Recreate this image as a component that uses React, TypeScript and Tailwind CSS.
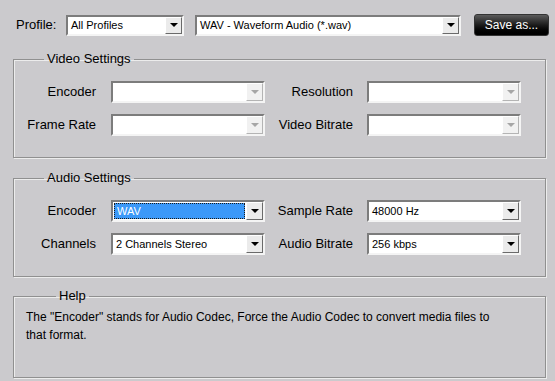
import React from "react";

type ComboProps = {
  value?: string;
  width: string;
  height?: string;
  disabled?: boolean;
  selected?: boolean;
};

// classic sunken combo box with a little raised arrow button
const Combo: React.FC<ComboProps> = ({ value = "", width, height = "h-[22px]", disabled, selected }) => {
  return (
    <div
      className={`${width} ${height} flex bg-white border-2 border-t-[#7c7c7c] border-l-[#7c7c7c] border-b-[#f4f4f4] border-r-[#f4f4f4]`}
    >
      <div className="flex-1 flex items-center min-w-0 p-[1px]">
        {selected ? (
          <div className="h-full w-full flex items-center bg-[#3b98f8] border border-dotted border-[#1a1a1a] pl-[2px] text-[11px] text-white">
            {value}
          </div>
        ) : (
          <span className="pl-[2px] text-[11px] text-black whitespace-nowrap">{value}</span>
        )}
      </div>
      <div
        className={`w-[17px] h-full flex items-center justify-center border border-t-white border-l-white ${
          disabled
            ? "bg-[#f1f1f1] border-b-[#b4b4b4] border-r-[#b4b4b4]"
            : "bg-[#ebebeb] border-b-[#6a6a6a] border-r-[#6a6a6a]"
        }`}
      >
        <div
          className={`w-0 h-0 border-x-[4px] border-x-transparent border-t-[4px] ${
            disabled ? "border-t-[#a6a6a6]" : "border-t-black"
          }`}
        />
      </div>
    </div>
  );
};

type RowProps = {
  left: string;
  right: string;
  leftCombo: React.ReactNode;
  rightCombo: React.ReactNode;
};

const Row: React.FC<RowProps> = ({ left, right, leftCombo, rightCombo }) => (
  <div className="flex items-center">
    <span className="w-[82px] text-right text-[13px] text-black">{left}</span>
    <div className="ml-[15px]">{leftCombo}</div>
    <span className="w-[88px] text-right text-[13px] text-black">{right}</span>
    <div className="ml-[14px]">{rightCombo}</div>
  </div>
);

const Group: React.FC<{ title: string; className?: string; children: React.ReactNode }> = ({
  title,
  className = "",
  children,
}) => (
  <fieldset
    className={`mx-[13px] w-[533px] border border-[#909090] shadow-[inset_1px_1px_0_#ececec,1px_1px_0_#ececec] ${className}`}
  >
    <legend className="ml-[30px] px-[3px] text-[13px] leading-[16px] text-black">{title}</legend>
    {children}
  </fieldset>
);

const App: React.FC = () => {
  return (
    <div className="w-[555px] h-[381px] overflow-hidden bg-[#cbcacd] font-['Liberation_Sans',Arial,sans-serif]">
      {/* Profile bar */}
      <div className="flex items-center pt-[14px] pl-[16px]">
        <span className="w-[50px] text-[13px] text-black">Profile:</span>
        <Combo value="All Profiles" width="w-[118px]" height="h-[21px]" />
        <div className="ml-[11px]">
          <Combo value="WAV - Waveform Audio (*.wav)" width="w-[266px]" height="h-[21px]" />
        </div>
        <button className="ml-[13px] w-[75px] h-[22px] rounded-[3px] border border-[#333] bg-gradient-to-b from-[#5c5c5c] via-[#1c1c1c] to-black text-[12px] text-white">
          Save as...
        </button>
      </div>

      {/* Video Settings */}
      <Group title="Video Settings" className="mt-[15px] pt-[14px] pb-[21px]">
        <div className="flex flex-col gap-[11px]">
          <Row
            left="Encoder"
            right="Resolution"
            leftCombo={<Combo width="w-[154px]" disabled />}
            rightCombo={<Combo width="w-[154px]" disabled />}
          />
          <Row
            left="Frame Rate"
            right="Video Bitrate"
            leftCombo={<Combo width="w-[154px]" disabled />}
            rightCombo={<Combo width="w-[154px]" disabled />}
          />
        </div>
      </Group>

      {/* Audio Settings */}
      <Group title="Audio Settings" className="mt-[12px] pt-[14px] pb-[21px]">
        <div className="flex flex-col gap-[11px]">
          <Row
            left="Encoder"
            right="Sample Rate"
            leftCombo={<Combo value="WAV" width="w-[154px]" selected />}
            rightCombo={<Combo value="48000 Hz" width="w-[154px]" />}
          />
          <Row
            left="Channels"
            right="Audio Bitrate"
            leftCombo={<Combo value="2 Channels Stereo" width="w-[154px]" />}
            rightCombo={<Combo value="256 kbps" width="w-[154px]" />}
          />
        </div>
      </Group>

      {/* Help */}
      <Group title="Help" className="mt-[11px] h-[90px] pt-[4px] pl-[12px]">
        <p className="text-[12px] leading-[18px] text-black">
          The "Encoder" stands for Audio Codec, Force the Audio Codec to convert media files to
          <br />
          that format.
        </p>
      </Group>
    </div>
  );
};

export default App;
